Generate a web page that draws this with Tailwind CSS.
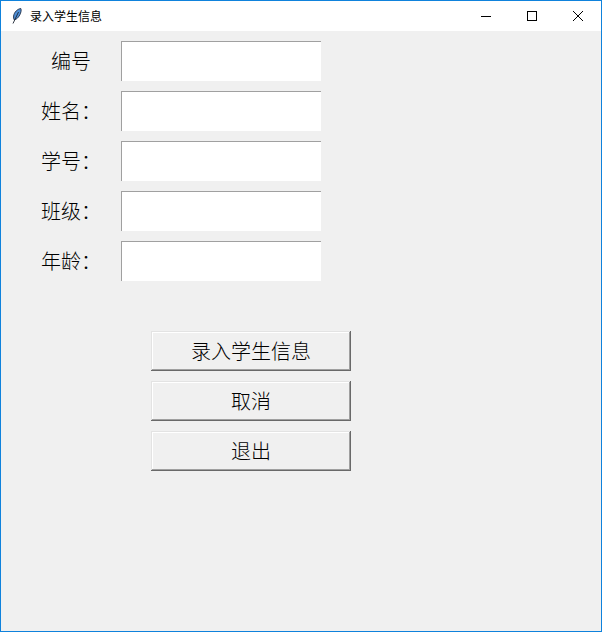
<!DOCTYPE html>
<html lang="zh-CN">
<head>
<meta charset="utf-8">
<title>录入学生信息</title>
<script src="https://cdn.jsdelivr.net/npm/@tailwindcss/browser@4"></script>
</head>
<body class="bg-[#f0f0f0]">
<div class="w-[602px] h-[632px] border border-[#0f82dc] bg-[#f0f0f0] flex flex-col overflow-hidden font-['Noto_Sans_CJK_SC','Liberation_Sans',sans-serif] font-light text-black">
  <div class="h-[30px] bg-white flex items-center shrink-0">
    <svg class="ml-[11px] w-[10px] h-[16px]" viewBox="0 0 10 16" fill="none">
      <path d="M8.8 0.5 C5.5 1 2.2 4 1.6 8 C1.4 9.5 1.6 11 2.2 11.8 C5 11.5 8 8 9 3.5 C9.2 2.2 9.2 1.2 8.8 0.5 Z" fill="#4f8fd6" stroke="#1f2d45" stroke-width="0.9"/>
      <path d="M6.5 4 L1 15.5" stroke="#1a2230" stroke-width="0.9"/>
    </svg>
    <span class="ml-[8px] text-[12px] leading-none font-normal">录入学生信息</span>
    <div class="ml-auto flex h-full">
      <div class="w-[46px] flex items-center justify-center">
        <svg width="10" height="10" viewBox="0 0 10 10"><path d="M0 5.5H10" stroke="#000" stroke-width="1"/></svg>
      </div>
      <div class="w-[46px] flex items-center justify-center">
        <svg width="10" height="10" viewBox="0 0 10 10"><rect x="0.5" y="0.5" width="9" height="9" fill="none" stroke="#000" stroke-width="1"/></svg>
      </div>
      <div class="w-[46px] flex items-center justify-center">
        <svg width="10" height="10" viewBox="0 0 10 10"><path d="M0 0L10 10M10 0L0 10" stroke="#000" stroke-width="1"/></svg>
      </div>
    </div>
  </div>

  <div class="pt-[10px] flex flex-col gap-[10px]">
    <div class="flex items-center h-[40px]"><span class="ml-[20px] w-[100px] text-center text-[20px] leading-none">编号</span><div class="w-[200px] h-[40px] bg-white border-t border-l border-[#a0a0a0]"></div></div>
    <div class="flex items-center h-[40px]"><span class="ml-[20px] w-[100px] text-center text-[20px] leading-none">姓名：</span><div class="w-[200px] h-[40px] bg-white border-t border-l border-[#a0a0a0]"></div></div>
    <div class="flex items-center h-[40px]"><span class="ml-[20px] w-[100px] text-center text-[20px] leading-none">学号：</span><div class="w-[200px] h-[40px] bg-white border-t border-l border-[#a0a0a0]"></div></div>
    <div class="flex items-center h-[40px]"><span class="ml-[20px] w-[100px] text-center text-[20px] leading-none">班级：</span><div class="w-[200px] h-[40px] bg-white border-t border-l border-[#a0a0a0]"></div></div>
    <div class="flex items-center h-[40px]"><span class="ml-[20px] w-[100px] text-center text-[20px] leading-none">年龄：</span><div class="w-[200px] h-[40px] bg-white border-t border-l border-[#a0a0a0]"></div></div>
  </div>

  <div class="mt-[50px] ml-[150px] flex flex-col gap-[10px] w-[200px]">
    <div class="h-[40px] flex items-center justify-center text-[20px] leading-none bg-[#f0f0f0] shadow-[inset_-1px_-1px_0_#696969,inset_1px_1px_0_#e3e3e3,inset_-2px_-2px_0_#a0a0a0,inset_2px_2px_0_#ffffff]">录入学生信息</div>
    <div class="h-[40px] flex items-center justify-center text-[20px] leading-none bg-[#f0f0f0] shadow-[inset_-1px_-1px_0_#696969,inset_1px_1px_0_#e3e3e3,inset_-2px_-2px_0_#a0a0a0,inset_2px_2px_0_#ffffff]">取消</div>
    <div class="h-[40px] flex items-center justify-center text-[20px] leading-none bg-[#f0f0f0] shadow-[inset_-1px_-1px_0_#696969,inset_1px_1px_0_#e3e3e3,inset_-2px_-2px_0_#a0a0a0,inset_2px_2px_0_#ffffff]">退出</div>
  </div>
</div>
</body>
</html>
